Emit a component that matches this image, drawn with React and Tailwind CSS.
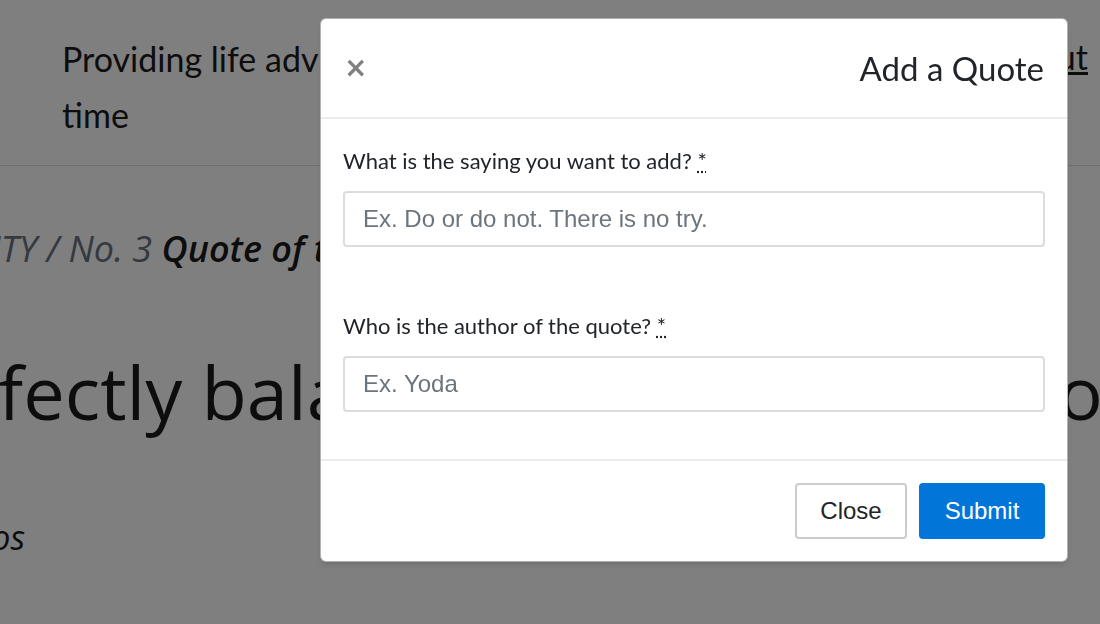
import React from 'react';

const bodyFont = { fontFamily: 'Lato, "Noto Sans", sans-serif' };
const sansFont = { fontFamily: '"Liberation Sans", Arial, sans-serif' };

function Backdrop() {
	return (
		<div className="min-h-[624px] w-full overflow-hidden bg-white text-[#1a1a1a]">
			{/* Top header */}
			<header className="flex items-start justify-between border-b border-[#dcdcdc] pt-[31px] pb-[22px] pl-[62px] pr-[12px]">
				<p className="w-[560px] text-[34px] leading-[56px]" style={bodyFont}>
					Providing life advice, one quote at a time
				</p>
				<a className="mt-[6px] text-[34px] leading-[40px] underline" style={bodyFont}>
					About
				</a>
			</header>

			{/* Breadcrumb */}
			<div className="-ml-[166px] mt-[56px] whitespace-nowrap text-[36px] italic" style={{ fontFamily: '"Open Sans", sans-serif' }}>
				<span className="text-[#6b7280]">COMMUNITY / No. 3 </span>
				<span className="font-semibold">Quote of the Day</span>
			</div>

			{/* Big quote */}
			<h1 className="-ml-[118px] mt-[60px] whitespace-nowrap text-[74px] font-medium" style={{ fontFamily: '"Open Sans", sans-serif' }}>
				Perfectly balanced, as all things should be
			</h1>

			<p className="-ml-[84px] mt-[65px] text-[34px] italic" style={{ fontFamily: '"Open Sans", sans-serif' }}>
				Thanos
			</p>
		</div>
	);
}

function Field({ label, placeholder, className = '' }) {
	return (
		<div className={className}>
			<label className="block text-[22px] leading-[26px] text-[#212529]" style={bodyFont}>
				{label}{' '}
				<abbr title="required" className="cursor-help no-underline [text-decoration:underline_dotted]">
					*
				</abbr>
			</label>
			<input
				type="text"
				placeholder={placeholder}
				className="mt-[17px] block h-[56px] w-full rounded-[4px] border-2 border-[#dcdcdc] bg-white px-[18px] text-[24px] text-[#495057] placeholder:text-[#6c757d] focus:outline-none"
				style={sansFont}
			/>
		</div>
	);
}

export default function App() {
	return (
		<div className="relative min-h-[624px] w-full">
			<Backdrop />

			{/* Modal overlay */}
			<div className="fixed inset-0 bg-black/50">
				<div className="absolute left-[320px] top-[18px] w-[748px] overflow-hidden rounded-[6px] border border-black/30 bg-white shadow-md">
					<div className="flex h-[100px] items-center justify-between border-b-2 border-[#ececec] pl-[23px] pr-[23px]">
						<button className="text-[28px] font-bold leading-none text-[#808080]" style={{ fontFamily: '"DejaVu Sans", sans-serif' }}>
							×
						</button>
						<h2 className="text-[33px] leading-none text-[#212529]" style={bodyFont}>
							Add a Quote
						</h2>
					</div>

					<div className="px-[22px] pt-[29px] pb-[47px]">
						<Field label="What is the saying you want to add?" placeholder="Ex. Do or do not. There is no try." />
						<Field className="mt-[66px]" label="Who is the author of the quote?" placeholder="Ex. Yoda" />
					</div>

					<div className="flex justify-end gap-[12px] border-t-2 border-[#ececec] px-[22px] pt-[22px] pb-[22px]" style={sansFont}>
						<button className="h-[56px] w-[112px] rounded-[4px] border-2 border-[#cccccc] bg-white text-[24px] text-[#212529]">
							Close
						</button>
						<button className="h-[56px] w-[126px] rounded-[4px] bg-[#0275d8] text-[24px] text-white">
							Submit
						</button>
					</div>
				</div>
			</div>
		</div>
	);
}
